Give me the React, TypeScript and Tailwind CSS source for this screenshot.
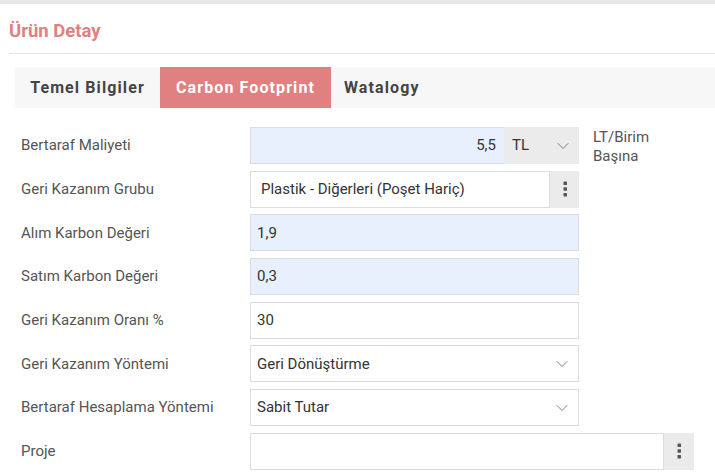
import { ChevronDown } from "lucide-react";

const font = { fontFamily: "Roboto, 'Liberation Sans', sans-serif" };

function Dots() {
  return (
    <svg width="4" height="16" viewBox="0 0 4 16" className="fill-[#555]">
      <rect x="0.5" y="0.5" width="3.5" height="3.5" rx="0.6" />
      <rect x="0.5" y="6.2" width="3.5" height="3.5" rx="0.6" />
      <rect x="0.5" y="11.9" width="3.5" height="3.5" rx="0.6" />
    </svg>
  );
}

function Row({ label, children }: { label: string; children: React.ReactNode }) {
  return (
    <div className="flex h-[37px] items-center">
      <div className="w-[229px] shrink-0 text-[15px] text-[#555]">{label}</div>
      {children}
    </div>
  );
}

const box = "flex h-[37px] items-center border border-[#dcdcdc] px-[6px] text-[15px] text-[#333]";

export default function App() {
  return (
    <div className="h-[475px] w-[715px] overflow-hidden bg-white" style={font}>
      <div className="h-[4px] bg-[#e6e8ec]" />
      <div className="pl-[9px]">
        <h1 className="pt-[16px] text-[18.5px] font-bold leading-[22px] text-[#e08080]">Ürün Detay</h1>
        <div className="mt-[11px] h-px bg-[#e4e4e4]" />
        <div className="ml-[6px] mt-[13px] flex h-[41px] bg-[#f7f7f7] text-[16px] font-bold tracking-[1.1px]">
          <div className="flex w-[145px] items-center justify-center text-[#444]">Temel Bilgiler</div>
          <div className="flex w-[171px] items-center justify-center bg-[#e08080] text-white">Carbon Footprint</div>
          <div className="flex items-center pl-[13px] text-[#444]">Watalogy</div>
        </div>
      </div>
      <div className="mt-[19px] flex flex-col gap-[6.7px] pl-[21px]">
        <Row label="Bertaraf Maliyeti">
          <div className="flex w-[329px]">
            <div className={`${box} flex-1 justify-end bg-[#e8f0fe] pr-[8px]`}>5,5</div>
            <div className="-ml-px flex h-[37px] w-[75px] items-center justify-between bg-[#ebebeb] pl-[8px] pr-[6px] text-[15px] text-[#333]">
              TL
              <ChevronDown size={20} strokeWidth={1} className="text-[#666]" />
            </div>
          </div>
          <div className="ml-[14px] self-start pt-px text-[15px] leading-[19px] text-[#555]">
            LT/Birim
            <br />
            Başına
          </div>
        </Row>
        <Row label="Geri Kazanım Grubu">
          <div className="flex w-[329px]">
            <div className={`${box} flex-1 pl-[10px]`}>Plastik - Diğerleri (Poşet Hariç)</div>
            <div className="flex h-[37px] w-[29px] items-center justify-center bg-[#ebebeb]">
              <Dots />
            </div>
          </div>
        </Row>
        <Row label="Alım Karbon Değeri">
          <div className={`${box} w-[329px] bg-[#e8f0fe]`}>1,9</div>
        </Row>
        <Row label="Satım Karbon Değeri">
          <div className={`${box} w-[329px] bg-[#e8f0fe]`}>0,3</div>
        </Row>
        <Row label="Geri Kazanım Oranı %">
          <div className={`${box} w-[329px]`}>30</div>
        </Row>
        <Row label="Geri Kazanım Yöntemi">
          <div className={`${box} w-[329px] justify-between pr-[6px]`}>
            Geri Dönüştürme
            <ChevronDown size={20} strokeWidth={1} className="text-[#666]" />
          </div>
        </Row>
        <Row label="Bertaraf Hesaplama Yöntemi">
          <div className={`${box} w-[329px] justify-between pr-[6px]`}>
            Sabit Tutar
            <ChevronDown size={20} strokeWidth={1} className="text-[#666]" />
          </div>
        </Row>
        <Row label="Proje">
          <div className="flex w-[444px]">
            <div className={`${box} flex-1`} />
            <div className="flex h-[37px] w-[30px] items-center justify-center bg-[#ebebeb]">
              <Dots />
            </div>
          </div>
        </Row>
      </div>
    </div>
  );
}
